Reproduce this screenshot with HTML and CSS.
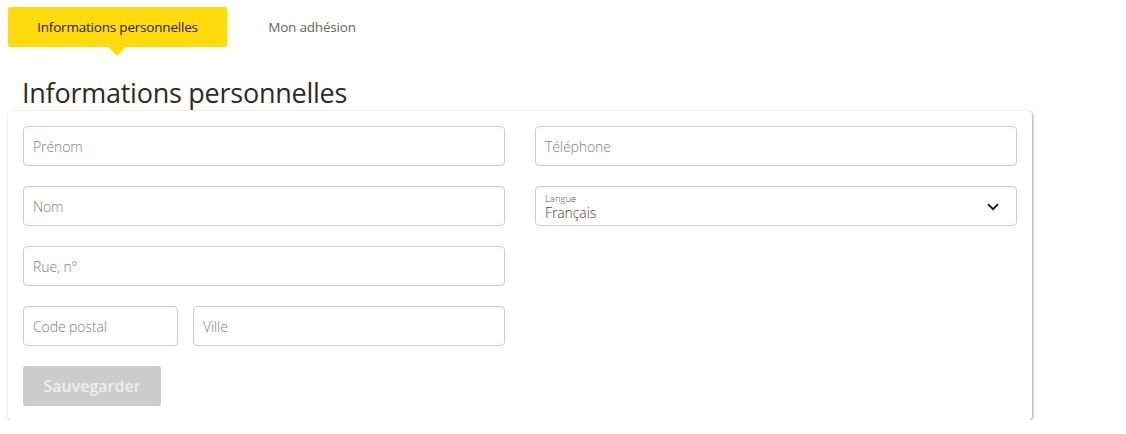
FILE: index.html
```html
<!DOCTYPE html>
<html lang="fr">
<head>
<meta charset="utf-8">
<title>Informations personnelles</title>
<link rel="stylesheet" href="styles.css">
</head>
<body>
<nav class="tabs">
  <a class="tab tab-active">Informations personnelles</a>
  <a class="tab">Mon adhésion</a>
</nav>
<h1 class="title">Informations personnelles</h1>
<form class="card">
  <div class="cols">
    <div class="col">
      <div class="field"><span class="ph">Prénom</span></div>
      <div class="field"><span class="ph">Nom</span></div>
      <div class="field"><span class="ph">Rue, n°</span></div>
      <div class="row">
        <div class="field field-zip"><span class="ph">Code postal</span></div>
        <div class="field field-city"><span class="ph">Ville</span></div>
      </div>
      <div class="actions"><button type="button" class="btn">Sauvegarder</button></div>
    </div>
    <div class="col">
      <div class="field"><span class="ph">Téléphone</span></div>
      <div class="field field-select">
        <div class="select-text">
          <span class="select-label">Langue</span>
          <span class="select-value">Français</span>
        </div>
        <svg class="chev" width="12" height="8" viewBox="0 0 12 8"><path d="M1 1.2 L6 6.2 L11 1.2" fill="none" stroke="#111" stroke-width="1.8"/></svg>
      </div>
    </div>
  </div>
</form>
</body>
</html>
```
FILE: styles.css
```css
* { box-sizing: border-box; }
body {
  margin: 0;
  padding: 7px 8px 0 8px;
  font-family: "Segoe UI", "Open Sans", "Noto Sans", sans-serif;
  color: #333;
  background: #fff;
  width: 1126px;
}
.tabs {
  display: flex;
  height: 40px;
}
.tab {
  display: flex;
  align-items: center;
  justify-content: center;
  font-size: 13.5px;
  color: #666;
  height: 40px;
  letter-spacing: -0.2px;
}
.tab-active {
  position: relative;
  width: 219px;
  background: #ffdb0e;
  color: #222;
  border-radius: 2px;
}
.tab-active::after {
  content: "";
  position: absolute;
  left: 100px;
  bottom: -9px;
  border-left: 9px solid transparent;
  border-right: 9px solid transparent;
  border-top: 9px solid #ffdb0e;
}
.tab + .tab {
  margin-left: 40px;
  width: 90px;
}
.title {
  margin: 28px 0 0 14px;
  font-size: 27px;
  font-weight: 400;
  line-height: 36px;
  color: #2b2b2b;
  letter-spacing: -0.25px;
}
.card {
  margin-top: 0;
  width: 1024px;
  background: #fff;
  border-radius: 4px;
  box-shadow: 1px 1px 3px rgba(0,0,0,0.35), 0 0 2px rgba(0,0,0,0.06);
  padding: 15px 15px 14px 15px;
}
.cols {
  display: grid;
  grid-template-columns: 482px 482px;
  column-gap: 30px;
}
.col {
  display: flex;
  flex-direction: column;
  gap: 20px;
}
.field {
  height: 40px;
  border: 1px solid #ccc;
  border-radius: 4px;
  display: flex;
  align-items: center;
  padding-left: 9px;
  font-size: 14px;
  font-weight: 300;
  color: #808080;
}
.ph { letter-spacing: -0.1px; }
.row {
  display: flex;
  gap: 15px;
}
.field-zip { width: 155px; }
.field-city { width: 312px; }
.field-select {
  justify-content: space-between;
  padding-right: 17px;
}
.select-text {
  display: flex;
  flex-direction: column;
  padding-top: 2px;
}
.select-label {
  font-size: 9.5px;
  color: #555;
  line-height: 11px;
}
.select-value {
  font-size: 14px;
  color: #444;
  line-height: 17px;
  letter-spacing: -0.1px;
}
.chev { margin-top: 1px; }
.btn {
  width: 138px;
  height: 40px;
  border: 0;
  border-radius: 3px;
  background: #cccccc;
  color: #eeeeee;
  font-family: inherit;
  font-size: 16px;
  font-weight: 600;
  cursor: default;
}
.actions { display: flex; }
```
